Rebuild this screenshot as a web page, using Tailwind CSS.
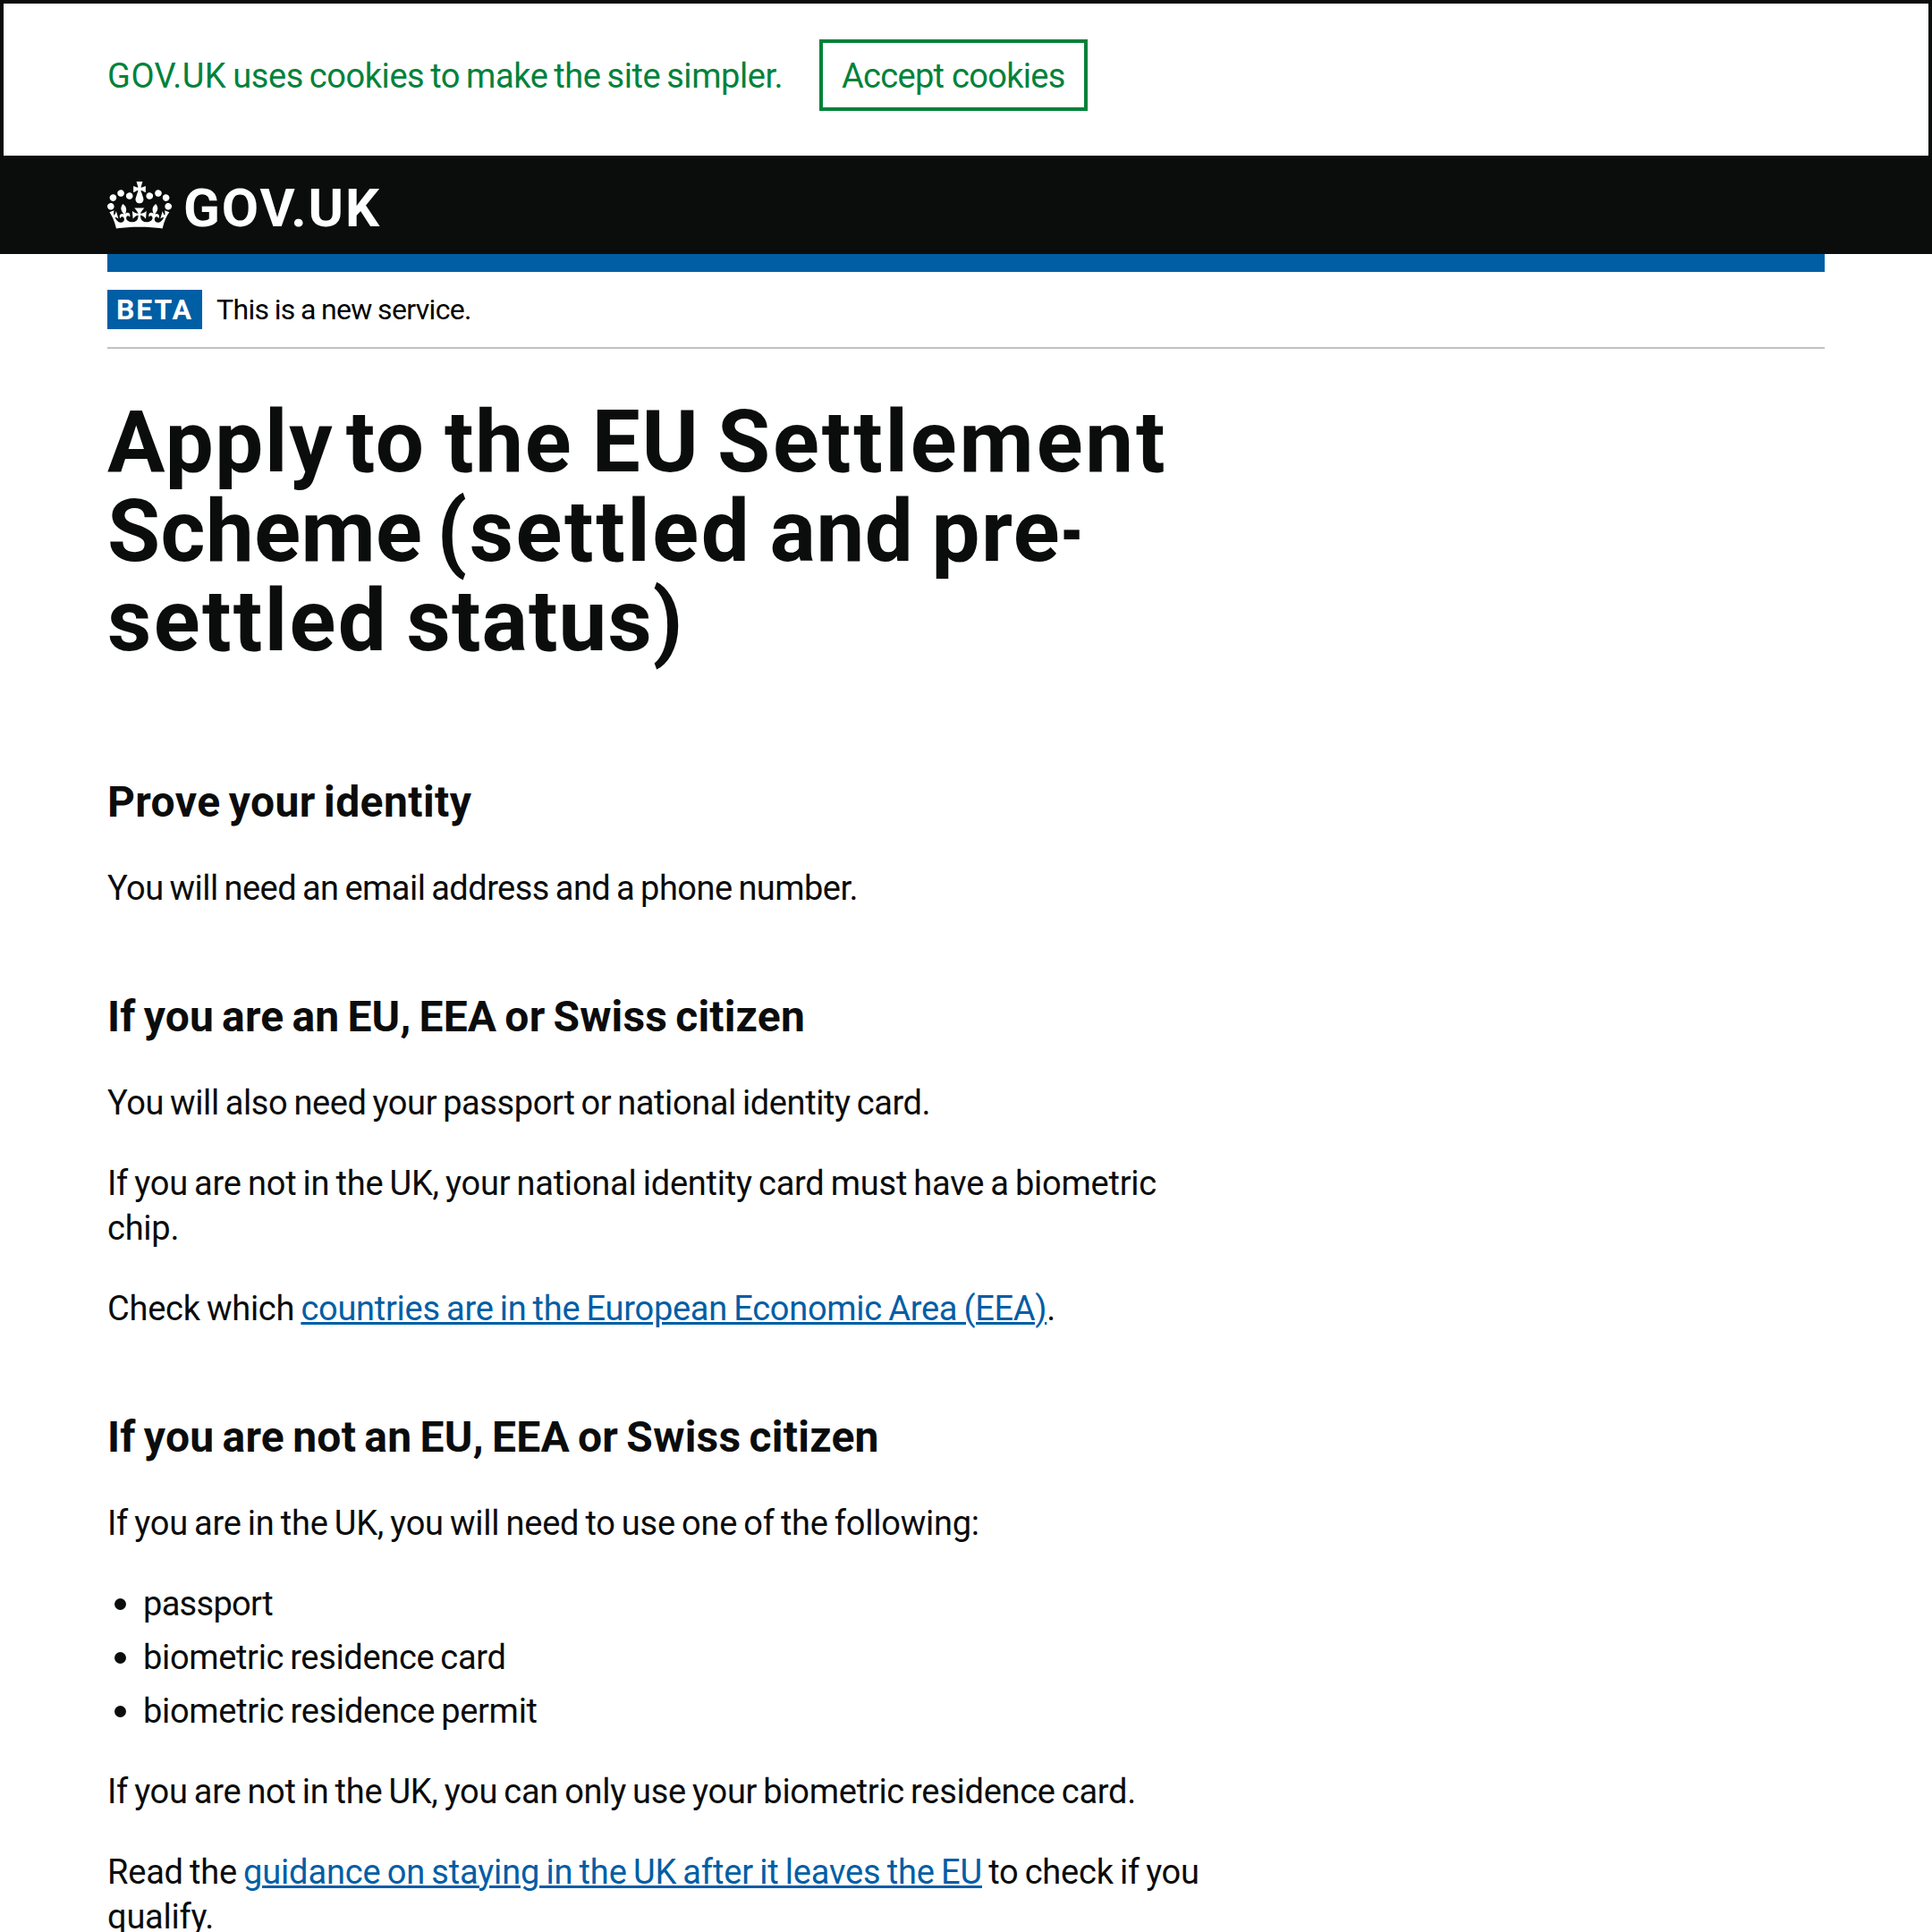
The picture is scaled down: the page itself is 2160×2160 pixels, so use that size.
<!DOCTYPE html>
<html lang="en">
<head>
<meta charset="utf-8">
<title>Apply to the EU Settlement Scheme - GOV.UK</title>
<script src="https://cdn.jsdelivr.net/npm/@tailwindcss/browser@4"></script>
</head>
<body class="h-[2160px] overflow-hidden bg-white font-['Roboto',sans-serif] text-[38px] leading-[50px] whitespace-nowrap text-[#0b0c0c] [word-spacing:-2px]">

  <div class="h-[174px] border-4 border-b-0 border-[#0b0c0c] bg-white px-[116px] pt-10">
    <div class="flex h-20 items-center text-[#00823b]">
      <p class="w-[796px] pt-[2px] tracking-[-0.3px]"><span class="tracking-[0.5px]">GOV.UK</span> <span class="tracking-[-0.44px]">uses cookies to make the site simpler.</span></p>
      <button class="flex h-20 w-[300px] items-center border-4 border-[#00823b] pt-[2px] pl-[21px] tracking-[-0.7px]">Accept cookies</button>
    </div>
  </div>

  <header class="flex h-[110px] items-center bg-[#0b0c0c] px-[120px] text-white">
    <svg class="h-[53px] w-[72px]" viewBox="0 0 132 97" fill="currentColor" aria-hidden="true">
      <path d="M25 30.2c3.5 1.5 7.7-.2 9.1-3.7 1.5-3.6-.2-7.8-3.9-9.2-3.6-1.4-7.6.3-9.1 3.9-1.4 3.5.3 7.5 3.9 9zM9 39.5c3.6 1.5 7.8-.2 9.2-3.7 1.5-3.6-.2-7.8-3.9-9.1-3.6-1.5-7.6.2-9.1 3.8-1.4 3.5.3 7.5 3.8 9zM4.4 57.2c3.5 1.5 7.7-.2 9.1-3.8 1.5-3.6-.2-7.7-3.9-9.1-3.5-1.5-7.6.3-9.1 3.8-1.4 3.5.3 7.6 3.9 9.1zm38.3-21.4c3.5 1.5 7.7-.2 9.1-3.8 1.5-3.6-.2-7.7-3.9-9.1-3.6-1.5-7.6.3-9.1 3.8-1.3 3.6.4 7.7 3.9 9.1zm64.4-5.6c-3.6 1.5-7.8-.2-9.1-3.7-1.5-3.6.2-7.8 3.8-9.2 3.6-1.4 7.7.3 9.2 3.9 1.3 3.5-.4 7.5-3.9 9zm15.9 9.3c-3.6 1.5-7.7-.2-9.1-3.7-1.5-3.6.2-7.8 3.7-9.1 3.6-1.5 7.7.2 9.2 3.8 1.5 3.5-.3 7.5-3.8 9zm4.7 17.7c-3.6 1.5-7.8-.2-9.2-3.8-1.5-3.6.2-7.7 3.9-9.1 3.6-1.5 7.7.3 9.2 3.8 1.3 3.5-.4 7.6-3.9 9.1zM89.3 35.8c-3.6 1.5-7.8-.2-9.2-3.8-1.4-3.6.2-7.7 3.9-9.1 3.6-1.5 7.7.3 9.2 3.8 1.4 3.6-.3 7.7-3.9 9.1zM69.7 17.7l8.9 4.7V9.3l-8.9 2.8c-.2-.3-.5-.6-.9-.9L72.4 0H59.6l3.5 11.2c-.3.3-.6.5-.9.9l-8.8-2.8v13.1l8.8-4.7c.3.3.6.7.9.9l-5 15.4v.1c-.2.8-.4 1.6-.4 2.4 0 4.1 3.1 7.5 7 8.1h.2c.3 0 .7.1 1 .1.4 0 .7 0 1-.1h.2c4-.6 7.1-4.1 7.1-8.1 0-.8-.1-1.7-.4-2.4V34l-5.1-15.4c.4-.2.7-.6 1-.9zM66 92.8c16.9 0 32.8 1.1 47.1 3.2 4-16.9 8.9-26.7 14-33.5l-9.6-3.4c1 4.9 1.1 7.2 0 10.2-1.5-1.4-3-4.3-4.2-8.7L108.6 76c2.8-2 5-3.2 7.5-3.3-4.4 9.4-10 11.9-13.6 11.2-4.3-.8-6.3-4.6-5.6-7.9 1-4.7 5.7-5.9 8-.5 4.3-8.7-3-11.4-7.6-8.8 7.1-7.2 7.9-13.5 2.1-21.1-8 6.1-8.1 12.3-4.5 20.8-4.7-5.4-12.1-2.5-9.5 6.2 3.4-5.2 7.9-2 7.2 3.1-.6 4.3-6.4 7.8-13.5 7.2-10.3-.9-10.9-8-11.2-13.8 2.5-.5 7.1 1.8 11 7.3L80.2 60c-4.1 4.4-8 5.3-12.3 5.4 1.4-4.4 8-11.6 8-11.6H55.5s6.4 7.2 7.9 11.6c-4.2-.1-8-1-12.3-5.4l1.4 16.4c3.9-5.5 8.5-7.7 10.9-7.3-.3 5.8-.9 12.8-11.1 13.8-7.2.6-12.9-2.9-13.5-7.2-.7-5 3.8-8.3 7.1-3.1 2.7-8.7-4.6-11.6-9.4-6.2 3.7-8.5 3.6-14.7-4.6-20.8-5.8 7.6-5 13.9 2.2 21.1-4.7-2.6-11.9.1-7.7 8.8 2.3-5.5 7.1-4.2 8.1.5.7 3.3-1.3 7.1-5.7 7.9-3.5.7-9-1.8-13.5-11.2 2.5.1 4.7 1.3 7.5 3.3l-4.7-15.4c-1.2 4.4-2.7 7.2-4.3 8.7-1.1-3-.9-5.3 0-10.2l-9.5 3.4c5 6.9 9.9 16.7 14 33.5 14.8-2.1 30.8-3.2 47.7-3.2z"/>
    </svg>
    <span class="ml-[13px] pt-[7px] text-[60px] leading-[60px] font-bold tracking-[1.9px]">GOV.UK</span>
  </header>

  <div class="mx-[120px]">
    <div class="h-5 bg-[#005ea5]"></div>
    <div class="flex h-[86px] items-center border-b-2 border-[#bfc1c3] text-[32px] leading-10">
      <strong class="mr-4 h-11 w-[106px] bg-[#005ea5] pt-[2px] pl-[10px] font-bold tracking-[1.9px] text-white">BETA</strong>
      <span class="tracking-[-0.65px] text-black [word-spacing:-1px]">This is a new service.</span>
    </div>

    <main class="pt-[54px]">
      <h1 class="mb-32 text-[96px] leading-[100px] font-bold [word-spacing:-4px]">
        <span class="block tracking-[1.69px]"><span class="[word-spacing:-12px]">Apply </span>to the EU <span class="-ml-[2px] tracking-[2.9px]">Settlement</span></span>
        <span class="block tracking-[0.42px]"><span class="[word-spacing:-8px]">Scheme </span><span class="tracking-[2.6px]">(settled</span> and <span class="tracking-[1.6px]">pre</span><span class="inline-block origin-left scale-x-[0.65]">-</span></span>
        <span class="block tracking-[1.4px]"><span class="tracking-[2.4px]">settled</span> <span class="-ml-[1px] tracking-[1.1px]">status)</span></span>
      </h1>

      <section class="mb-[94px]">
        <h2 class="mb-[46px] text-[48px] leading-[50px] font-bold tracking-[0.4px] [word-spacing:-3px]">Prove your identity</h2>
        <p class="tracking-[-0.54px]">You will need an email address and a phone number.</p>
      </section>

      <section class="mb-[94px]">
        <h2 class="mb-[46px] text-[48px] leading-[50px] font-bold tracking-[0.17px] [word-spacing:-3px]">If you are an EU, EEA or Swiss citizen</h2>
        <p class="mb-10 tracking-[-0.4px]">You will also need your passport or national identity card.</p>
        <p class="mb-10 tracking-[-0.23px]">If you are not in the UK, your national identity card must have a biometric<br>chip.</p>
        <p class="tracking-[-0.25px]">Check which <a class="tracking-[-0.26px] text-[#005ea5] underline decoration-[3px] underline-offset-[2px]">countries are in the European Economic Area (EEA)</a>.</p>
      </section>

      <section>
        <h2 class="mb-[46px] text-[48px] leading-[50px] font-bold tracking-[0.24px] [word-spacing:-3px]">If you are not an EU, EEA or Swiss citizen</h2>
        <p class="mb-10 tracking-[-0.24px]">If you are in the UK, you will need to use one of the following:</p>
        <ul class="mb-10 flex flex-col gap-[10px] pl-2">
          <li class="flex items-center gap-[19px] tracking-[-0.7px]"><span class="mt-[1px] size-[13px] rounded-full bg-[#0b0c0c]"></span>passport</li>
          <li class="flex items-center gap-[19px] tracking-[-0.34px]"><span class="mt-[1px] size-[13px] rounded-full bg-[#0b0c0c]"></span>biometric residence card</li>
          <li class="flex items-center gap-[19px] tracking-[-0.3px]"><span class="mt-[1px] size-[13px] rounded-full bg-[#0b0c0c]"></span>biometric residence permit</li>
        </ul>
        <p class="mb-10 tracking-[-0.28px]">If you are not in the UK, you can only use your biometric residence card.</p>
        <p class="tracking-[-0.22px]">Read the <a class="tracking-[-0.16px] text-[#005ea5] underline decoration-[3px] underline-offset-[2px]">guidance on staying in the UK after it leaves the EU</a> to check if you<br>qualify.</p>
      </section>
    </main>
  </div>
</body>
</html>
